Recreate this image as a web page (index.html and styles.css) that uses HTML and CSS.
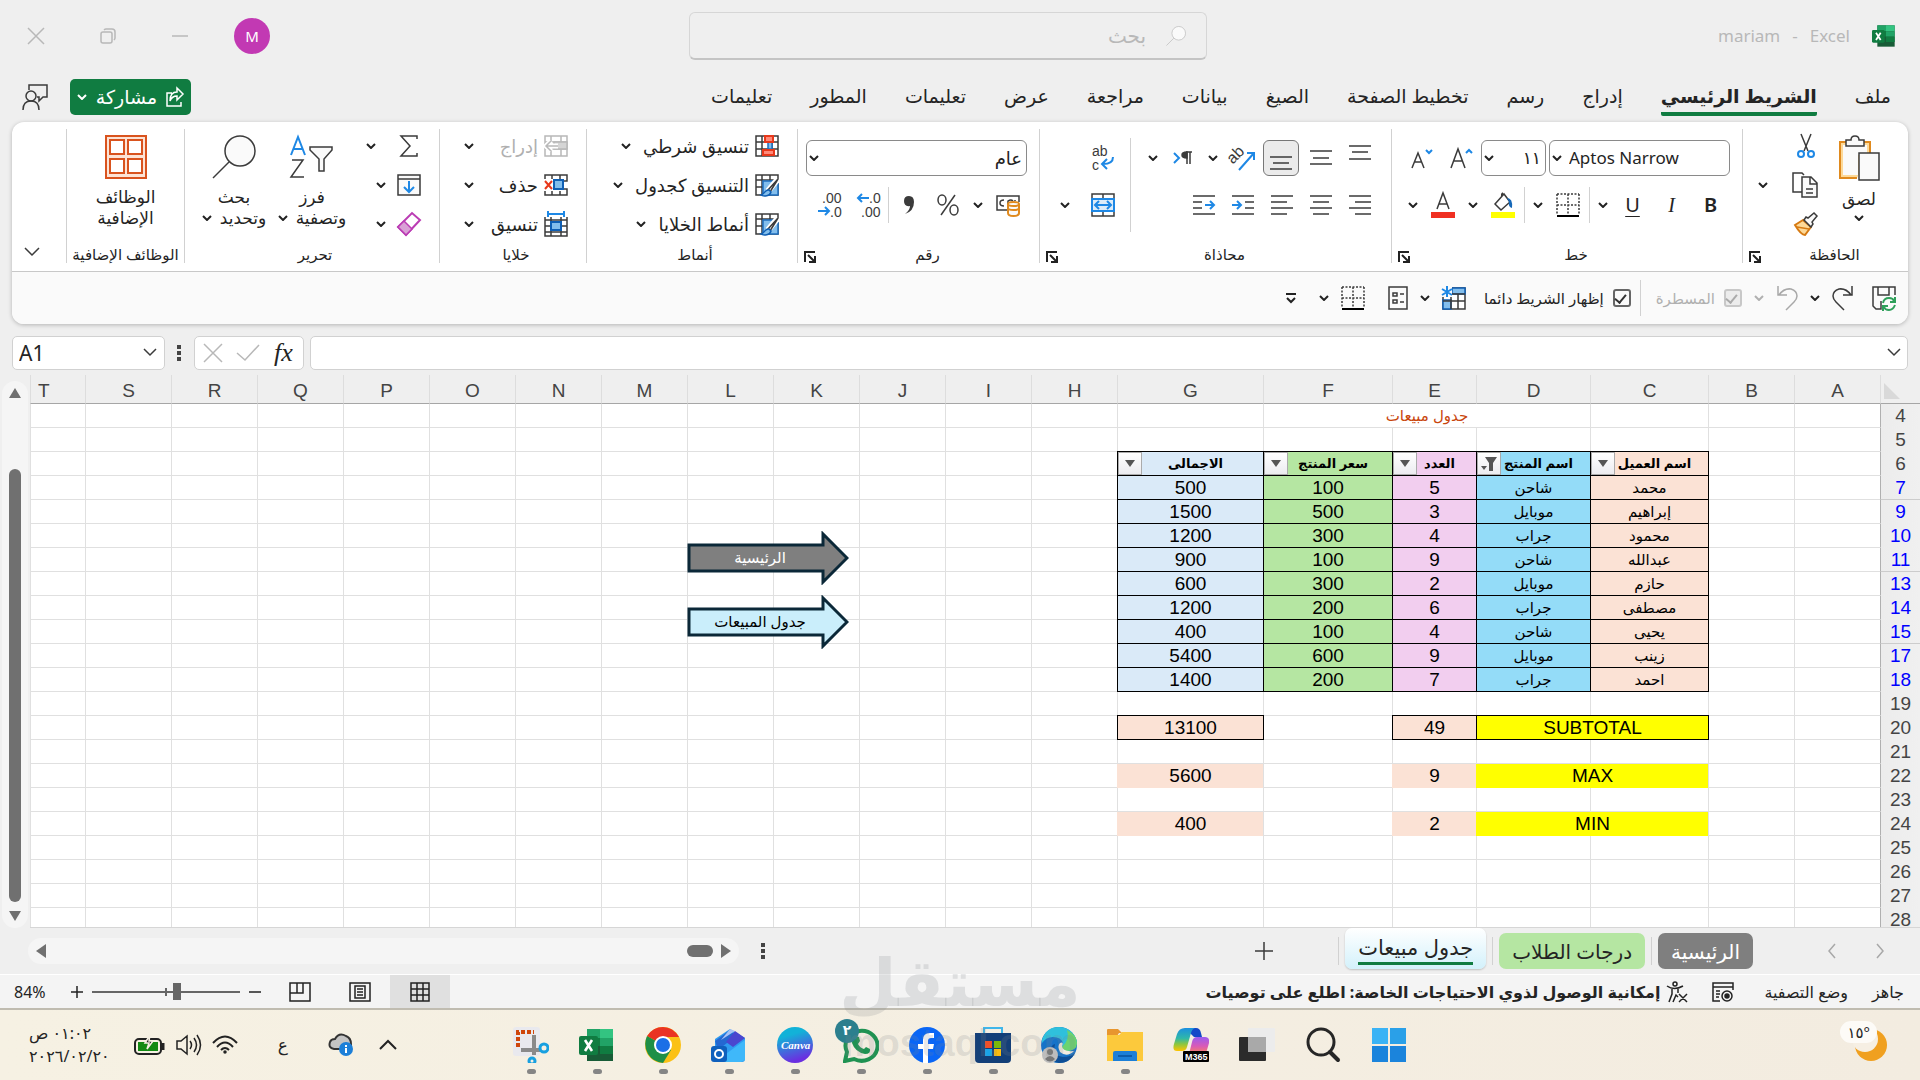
FILE: index.html
```html
<!doctype html>
<html lang="ar" dir="rtl">

<head>
  <meta charset="UTF-8">
  <meta name="viewport" content="width=device-width, initial-scale=1.0">
  <title>mariam - Excel</title>
  <link rel="stylesheet" href="styles.css">
</head>

<body>
  <!-- icon sprite -->
  <svg class="sprite" aria-hidden="true">
    <symbol id="chev" viewBox="0 0 10 6"><path d="M1 1l4 4 4-4" /></symbol>
    <symbol id="launch" viewBox="0 0 12 12"><path d="M1 11V1h10M4 4l6 6M11 5v6H5" /></symbol>
    <symbol id="lens" viewBox="0 0 44 44"><circle cx="28" cy="16" r="15" fill="#fafafa" /><path d="M17 27L1 43" /></symbol>
    <symbol id="borders" viewBox="0 0 24 24">
      <path d="M1 1h22M1 12h22M1 1v20M12 1v20M23 1v20" stroke-dasharray="2 1.5" />
      <path d="M1 23h22" stroke="#000" stroke-width="2" />
    </symbol>
    <symbol id="grid" viewBox="0 0 24 22">
      <path d="M1 1h22v20H1zM1 7h22M1 14h22M7 1v20M17 1v20" />
    </symbol>
    <symbol id="gridbrush" viewBox="0 0 24 24">
      <path d="M1 2h22v20H1zM1 7h22M1 14h22M7 2v20M15 2v20" fill="#fff" />
      <path d="M8 8h15v14H8z" fill="#83beec" stroke="#1e6fc0" />
      <path d="M23 6L13 18" stroke="#fff" stroke-width="6" />
      <path d="M23 6L13 17l2 2z" fill="#fff" />
      <path d="M14 17c-4-1-4 4-8 5 3 2 9 1 10-3z" fill="#83beec" stroke="#0f5fb4" />
    </symbol>
    <symbol id="excel" viewBox="0 0 36 36">
      <path d="M8 2h26v32H8z" fill="#185c37" /><path d="M8 2h13v9H8z" fill="#21a366" />
      <path d="M21 2h13v9H21z" fill="#33c481" /><path d="M8 11h13v8H8z" fill="#107c41" />
      <path d="M21 11h13v8H21z" fill="#21a366" /><path d="M21 19h13v8H21z" fill="#107c41" />
      <rect x="0" y="9" width="19" height="19" rx="2" fill="#107c41" />
      <path d="M6 13l7 11M13 13L6 24" stroke="#fff" stroke-width="2.6" />
    </symbol>
  </svg>

  <header class="titlebar">
    <div class="doc">
      <svg class="logo"><use href="#excel" /></svg>
      <span class="doc-name" dir="ltr"><span>mariam</span><span>-</span><span>Excel</span></span>
    </div>
    <label class="search">
      <svg class="ico pale" width="20" height="22"><use href="#lens" /></svg>
      <input type="search" placeholder="بحث" aria-label="بحث">
    </label>
    <div class="window-btns">
      <button class="avatar" type="button">M</button>
      <button type="button" aria-label="تصغير"><svg class="ico pale" width="16" height="16"><path d="M0 8h16" /></svg></button>
      <button type="button" aria-label="استعادة"><svg class="ico pale" width="16" height="16"><rect x="1" y="4" width="11" height="11" rx="2" /><path d="M4 2q1-1 2-1h6q3 0 3 3v6q0 1-1 2" /></svg></button>
      <button type="button" aria-label="إغلاق"><svg class="ico pale" width="16" height="16"><path d="M0 0l16 16M16 0L0 16" /></svg></button>
    </div>
  </header>

  <nav class="tabs">
    <a href="#">ملف</a>
    <a href="#" class="active">الشريط الرئيسي</a>
    <a href="#">إدراج</a>
    <a href="#">رسم</a>
    <a href="#">تخطيط الصفحة</a>
    <a href="#">الصيغ</a>
    <a href="#">بيانات</a>
    <a href="#">مراجعة</a>
    <a href="#">عرض</a>
    <a href="#">تعليمات</a>
    <a href="#">المطور</a>
    <a href="#">تعليمات</a>
    <button class="share" type="button">
      <svg class="ico" width="18" height="20"><path d="M6 6H1v13h14v-4M11 1l6 6-6 6V9q-5 0-7 5 0-9 7-9z" /></svg>
      <span>مشاركة</span>
      <svg class="chev"><use href="#chev" /></svg>
    </button>
    <button class="comments" type="button" aria-label="التعليقات">
      <svg class="ico" width="26" height="26"><path d="M7 6V1h18v12h-4l-4 4v-4h-2" /><circle cx="9" cy="12" r="5" /><path d="M1 26q0-9 8-9t8 9" /></svg>
    </button>
  </nav>

  <section class="ribbon">
    <div class="groups">
      <div class="group g-clip">
        <div class="body">
          <button class="big" type="button">
            <svg class="ico" width="42" height="46">
              <path d="M19 43H2V7h30v12" fill="#fdd998" stroke="#e08a1e" stroke-width="2" />
              <path d="M5 10h24v10h-9v20H5z" fill="#fafafa" stroke="none" />
              <path d="M8 11V5h5q0-4 4-4t4 4h5v6z" fill="#fafafa" />
              <path d="M21 18h20v27H21z" fill="#fafafa" />
            </svg>
            <span>لصق</span>
            <svg class="chev"><use href="#chev" /></svg>
          </button>
          <div class="stack">
            <button type="button" aria-label="قص"><svg class="ico" width="24" height="24"><path d="M7 0l7 17M17 0l-7 17" /><circle cx="7" cy="20" r="3" stroke="#1e88e5" stroke-width="2" /><circle cx="17" cy="20" r="3" stroke="#1e88e5" stroke-width="2" /></svg></button>
            <button type="button" aria-label="نسخ"><svg class="ico" width="26" height="26"><path d="M10 20H1V1h9l2 2" /><path d="M10 5h9l6 6v14H10zM18 5v7h7M14 17h7M14 21h7" fill="#fafafa" /></svg><svg class="chev"><use href="#chev" /></svg></button>
            <button type="button" aria-label="نسخ التنسيق"><svg class="ico" width="24" height="24"><path d="M9 8L1 13q6 10 10 10l6-8z" fill="#fdd998" stroke="#d67a12" stroke-width="2" /><path d="M3 15l12 2" stroke="#d67a12" /><path d="M10 8l7 7 2-3-1-2 5-6-3-3-6 5-2-1z" fill="#fafafa" /></svg></button>
          </div>
        </div>
        <div class="foot"><span>الحافظة</span><svg class="launch"><use href="#launch" /></svg></div>
      </div>

      <div class="group g-font">
        <div class="body two">
          <div class="line">
            <div class="combo name"><select aria-label="الخط" dir="ltr"><option>Aptos Narrow</option></select><svg class="chev"><use href="#chev" /></svg></div>
            <div class="combo size"><select aria-label="حجم الخط"><option>١١</option></select><svg class="chev"><use href="#chev" /></svg></div>
            <button class="slot" type="button" aria-label="تكبير"><svg class="ico" width="24" height="24"><path d="M1 22L8 3l7 19M4 15h8" /><path d="M16 7l3-3 3 3" stroke="#1e88e5" stroke-width="2" /></svg></button>
            <button class="slot" type="button" aria-label="تصغير"><svg class="ico" width="24" height="24"><path d="M1 22L7 7l6 15M3 16h8" /><path d="M15 4l3 3 3-3" stroke="#1e88e5" stroke-width="2" /></svg></button>
          </div>
          <div class="line">
            <button class="slot glyph bold" type="button">B</button>
            <button class="slot glyph italic" type="button">I</button>
            <button class="slot glyph under" type="button">U</button>
            <button class="drop" type="button" aria-label="تسطير"><svg class="chev"><use href="#chev" /></svg></button>
            <i class="bar"></i>
            <button class="slot" type="button" aria-label="حدود"><svg class="ico" width="24" height="24"><use href="#borders" /></svg></button>
            <button class="drop" type="button" aria-label="حدود"><svg class="chev"><use href="#chev" /></svg></button>
            <i class="bar"></i>
            <button class="slot" type="button" aria-label="لون التعبئة"><svg class="ico" width="24" height="26"><path d="M0 20h24v6H0z" fill="#ff0" stroke="none" /><path d="M12 1q-2 1-1 4M4 12l9-10 6 8-9 8z" /><path d="M16 6q6 0 5 10-4-1-3-6z" fill="#1668b8" stroke="none" /></svg></button>
            <button class="drop" type="button" aria-label="لون التعبئة"><svg class="chev"><use href="#chev" /></svg></button>
            <button class="slot" type="button" aria-label="لون الخط"><svg class="ico" width="24" height="26"><path d="M0 20h24v6H0z" fill="#f03022" stroke="none" /><path d="M6 17l6-16 6 16M8 12h8" /></svg></button>
            <button class="drop" type="button" aria-label="لون الخط"><svg class="chev"><use href="#chev" /></svg></button>
          </div>
        </div>
        <div class="foot"><span>خط</span><svg class="launch"><use href="#launch" /></svg></div>
      </div>

      <div class="group g-align">
        <div class="body">
          <div class="two align-main">
            <div class="line">
              <button class="slot" type="button" aria-label="محاذاة للأعلى"><svg class="ico" width="22" height="26"><path d="M0 1h22M3 7h16M0 14h22" /></svg></button>
              <button class="slot" type="button" aria-label="محاذاة للوسط"><svg class="ico" width="22" height="26"><path d="M0 6h22M3 13h16M0 19h22" /></svg></button>
              <button class="slot pressed" type="button" aria-label="محاذاة للأسفل"><svg class="ico" width="22" height="26"><path d="M0 12h22M3 18h16M0 24h22" /></svg></button>
              <button class="slot" type="button" aria-label="الاتجاه"><svg class="ico" width="26" height="26"><text class="rot" x="-12" y="16">ab</text><path d="M9 25L24 8M17 8h7v7" stroke="#1e88e5" stroke-width="2" /></svg></button>
              <button class="drop" type="button" aria-label="الاتجاه"><svg class="chev"><use href="#chev" /></svg></button>
              <button class="slot" type="button" aria-label="اتجاه النص"><svg class="ico" width="20" height="16"><path d="M1 3l5 5-5 5" stroke="#1e88e5" stroke-width="2" /><path d="M19 2h-6M14 2v12M17 2v12" /><path d="M14 2q-5 0-5 3t5 3z" fill="#3b3b3b" /></svg></button>
              <button class="drop" type="button" aria-label="اتجاه النص"><svg class="chev"><use href="#chev" /></svg></button>
            </div>
            <div class="line">
              <button class="slot" type="button" aria-label="يمين"><svg class="ico" width="22" height="22"><path d="M0 2h22M6 8h16M0 14h22M6 20h16" /></svg></button>
              <button class="slot" type="button" aria-label="توسيط"><svg class="ico" width="22" height="22"><path d="M0 2h22M3 8h16M0 14h22M3 20h16" /></svg></button>
              <button class="slot" type="button" aria-label="يسار"><svg class="ico" width="22" height="22"><path d="M0 2h22M0 8h16M0 14h22M0 20h16" /></svg></button>
              <button class="slot" type="button" aria-label="إنقاص المسافة"><svg class="ico" width="22" height="22"><path d="M0 2h22M13 8h9M13 14h9M0 20h22" /><path d="M0 11h9M5 7l4 4-4 4" stroke="#1e88e5" stroke-width="2" /></svg></button>
              <button class="slot" type="button" aria-label="زيادة المسافة"><svg class="ico" width="22" height="22"><path d="M0 2h22M0 8h9M0 14h9M0 20h22" /><path d="M12 11h9M17 7l4 4-4 4" stroke="#1e88e5" stroke-width="2" /></svg></button>
            </div>
          </div>
          <i class="bar tall"></i>
          <div class="two">
            <div class="line">
              <button class="slot" type="button" aria-label="التفاف النص"><svg class="ico" width="22" height="26"><text x="0" y="11">ab</text><text x="0" y="25">c</text><path d="M21 12q0 7-10 7M15 14l-5 5 5 5" stroke="#1e88e5" stroke-width="2" /></svg></button>
            </div>
            <div class="line">
              <button class="slot" type="button" aria-label="دمج وتوسيط"><svg class="ico" width="24" height="24"><path d="M1 1h22v22H1zM12 1v22" /><path d="M1 6h22v12H1z" fill="#dcecf9" stroke="#1e88e5" stroke-width="2" /><path d="M4 12h16M8 8l-4 4 4 4M16 8l4 4-4 4" stroke="#1e88e5" stroke-width="2" /></svg></button>
              <button class="drop wide" type="button" aria-label="دمج وتوسيط"><svg class="chev"><use href="#chev" /></svg></button>
            </div>
          </div>
        </div>
        <div class="foot"><span>محاذاة</span><svg class="launch"><use href="#launch" /></svg></div>
      </div>

      <div class="group g-num">
        <div class="body two">
          <div class="line">
            <div class="combo fill"><select aria-label="تنسيق الأرقام"><option>عام</option></select><svg class="chev"><use href="#chev" /></svg></div>
          </div>
          <div class="line">
            <button class="slot" type="button" aria-label="عملة"><svg class="ico" width="24" height="24"><path d="M12 17H1V3h22v6" /><path d="M8 7Q4 7 4 10t4 3M12 13V8q3-2 5 0M19 8v-1" /><path d="M12 11v9q0 3 5.500 3t5.500-3v-9q0-2-5.500-2T12 11z" fill="#fafafa" stroke="#e08a1e" stroke-width="2" /><path d="M12 11q0 2 5.500 2t5.500-2M12 15q0 2 5.500 2t5.500-2" stroke="#e08a1e" stroke-width="2" /></svg></button>
            <button class="drop" type="button" aria-label="عملة"><svg class="chev"><use href="#chev" /></svg></button>
            <button class="slot" type="button" aria-label="نسبة مئوية"><svg class="ico" width="24" height="24"><ellipse cx="6" cy="7" rx="4" ry="5" /><ellipse cx="18" cy="17" rx="4" ry="5" /><path d="M19 2L5 22" /></svg></button>
            <button class="slot" type="button" aria-label="فاصلة"><svg class="ico" width="12" height="20"><path d="M6 1q5 0 5 6 0 9-9 12 5-4 5-8Q1 12 1 6q0-5 5-5z" fill="#3b3b3b" stroke="none" /></svg></button>
            <i class="bar"></i>
            <button class="slot" type="button" aria-label="زيادة المنازل"><svg class="ico" width="24" height="26"><text x="12" y="11">.0</text><text x="4" y="25">.00</text><path d="M12 6H1M5 2L1 6l4 4" stroke="#1e88e5" stroke-width="2" /></svg></button>
            <button class="slot" type="button" aria-label="إنقاص المنازل"><svg class="ico" width="24" height="26"><text x="4" y="11">.00</text><text x="12" y="25">.0</text><path d="M0 19h11M7 15l4 4-4 4" stroke="#1e88e5" stroke-width="2" /></svg></button>
          </div>
        </div>
        <div class="foot"><span>رقم</span><svg class="launch"><use href="#launch" /></svg></div>
      </div>

      <div class="group g-styles">
        <div class="body stack text">
          <button type="button"><svg class="ico" width="24" height="22"><use href="#grid" /><path d="M13 7h4v7h-4z" fill="#83beec" stroke="#1e6fc0" /><path d="M10 1h8v6h-8zM8 15h11v5H8z" fill="#ff8a7a" stroke="#e8381b" stroke-width="2" /></svg><span>تنسيق شرطي</span><svg class="chev"><use href="#chev" /></svg></button>
          <button type="button"><svg class="ico" width="24" height="24"><use href="#gridbrush" /></svg><span>التنسيق كجدول</span><svg class="chev"><use href="#chev" /></svg></button>
          <button type="button"><svg class="ico" width="24" height="24"><use href="#gridbrush" /></svg><span>أنماط الخلايا</span><svg class="chev"><use href="#chev" /></svg></button>
        </div>
        <div class="foot"><span>أنماط</span></div>
      </div>

      <div class="group g-cells">
        <div class="body stack text">
          <button type="button" disabled><svg class="ico pale" width="24" height="22"><use href="#grid" /><path d="M10 7h13v7H10z" fill="#d5d5d5" /><path d="M14 11H2M7 6l-5 5 5 5" stroke="#fff" stroke-width="5" /><path d="M14 11H2M7 6l-5 5 5 5" /></svg><span>إدراج</span><svg class="chev"><use href="#chev" /></svg></button>
          <button type="button"><svg class="ico" width="24" height="22"><path d="M1 5V1h22v6h-6M1 17v4h22v-6h-6M8 1v4M16 1v4M8 21v-4M16 21v-4" /><path d="M10 6h9v9h-9z" fill="#83beec" stroke="#0f5fb4" stroke-width="2" /><path d="M1 7l7 8M8 7l-7 8" stroke="#e8381b" stroke-width="2" /></svg><span>حذف</span><svg class="chev"><use href="#chev" /></svg></button>
          <button type="button"><svg class="ico" width="24" height="26"><path d="M1 6v19h22V6M1 9h22M1 15h22M1 21h22M7 6v19M17 6v19" /><path d="M7 11h10v8H7z" fill="#83beec" stroke="#0f5fb4" stroke-width="2" /><path d="M4 3h16M4 0v6M20 0v6" stroke="#1e88e5" stroke-width="2" /></svg><span>تنسيق</span><svg class="chev"><use href="#chev" /></svg></button>
        </div>
        <div class="foot"><span>خلايا</span></div>
      </div>

      <div class="group g-edit">
        <div class="body">
          <div class="stack">
            <button type="button" aria-label="جمع تلقائي"><svg class="ico" width="24" height="22"><path d="M20 4V1H4l9 10-9 10h16v-3" /></svg><svg class="chev far"><use href="#chev" /></svg></button>
            <button type="button" aria-label="تعبئة"><svg class="ico" width="24" height="22"><path d="M1 1h22v20H1zM1 5h22" fill="#fafafa" /><path d="M12 7v11M7 13l5 5 5-5" stroke="#1e88e5" stroke-width="2" /></svg><svg class="chev"><use href="#chev" /></svg></button>
            <button type="button" aria-label="مسح"><svg class="ico" width="24" height="24"><path d="M1 15L15 1l8 7L9 23z" fill="#fff" stroke="#bb3cb4" stroke-width="2" /><path d="M1 15l6-6 8 8-6 6z" fill="#d9a0d6" stroke="#bb3cb4" /></svg><svg class="chev"><use href="#chev" /></svg></button>
          </div>
          <button class="big sort" type="button">
            <svg class="ico" width="44" height="44"><path d="M1 20L8 2l7 18M3 14h10" stroke="#1e88e5" stroke-width="2" /><path d="M2 25h11L1 42h13" /><path d="M20 12h22v3l-8 9v12h-5V24l-9-9z" fill="#fafafa" /></svg>
            <span>فرز</span>
            <span>وتصفية <svg class="chev"><use href="#chev" /></svg></span>
          </button>
          <button class="big find" type="button">
            <svg class="ico" width="44" height="44"><use href="#lens" /></svg>
            <span>بحث</span>
            <span>وتحديد <svg class="chev"><use href="#chev" /></svg></span>
          </button>
        </div>
        <div class="foot"><span>تحرير</span></div>
      </div>

      <div class="group g-addins">
        <div class="body">
          <button class="big" type="button">
            <svg class="ico" width="42" height="44"><path d="M1 1h40v42H1z" fill="#fde3d5" stroke="#d9531e" stroke-width="2" /><path d="M5 5h14v14H5zM23 5h14v14H23zM5 24h14v14H5zM23 24h14v14H23z" fill="#fff" stroke="#d9531e" stroke-width="2" /></svg>
            <span>الوظائف</span>
            <span>الإضافية</span>
          </button>
        </div>
        <div class="foot"><span>الوظائف الإضافية</span></div>
      </div>

      <button class="collapse" type="button" aria-label="طي الشريط"><svg class="ico" width="16" height="10"><path d="M1 1l7 7 7-7" /></svg></button>
    </div>

    <div class="quick">
      <button type="button" aria-label="حفظ"><svg class="ico" width="24" height="26"><path d="M23 10V2H1v19l3 3h5v-8M6 2v8h11V2" /><path d="M11 18q1-5 6-5 4 0 5 3M23 12v5h-5M23 20q-2 5-6 5-4 0-5-3M11 26v-5h5" stroke="#2ea05a" stroke-width="2" /></svg></button>
      <button type="button" aria-label="إعادة"><svg class="ico" width="22" height="24"><path d="M20 0v9h-9M19 9Q14 2 7 3 1 5 1 10q0 3 3 6l8 8" /></svg></button>
      <svg class="chev"><use href="#chev" /></svg>
      <button type="button" aria-label="تراجع"><svg class="ico dim" width="22" height="24"><path d="M2 0v9h9M3 9q5-7 12-6 6 2 6 7 0 3-3 6l-8 8" /></svg></button>
      <svg class="chev dim"><use href="#chev" /></svg>
      <label class="off"><input type="checkbox" checked disabled>المسطرة</label>
      <i class="bar"></i>
      <label><input type="checkbox" checked>إظهار الشريط دائما</label>
      <button type="button" aria-label="تجميد"><svg class="ico" width="24" height="24"><path d="M1 2h22v21H1z" fill="#fff" /><path d="M10 2h13v6H10zM1 14h8v9H1z" fill="#83beec" stroke="#0f5fb4" /><path d="M9 8v15M16 8v15M1 15h22M9 8h14" /><path d="M0 0h10v11H0z" fill="#fafafa" stroke="none" /><path d="M5 0v11M0 3l10 6M10 3L0 9" stroke="#1e88e5" stroke-width="2" /></svg></button>
      <svg class="chev"><use href="#chev" /></svg>
      <button type="button" aria-label="نموذج"><svg class="ico" width="20" height="24"><path d="M1 1h18v22H1zM5 7h4v3H5zM12 8h4M5 14h4v3H5zM12 16h4" /></svg></button>
      <button class="edges" type="button" aria-label="حدود"><svg class="ico" width="24" height="24"><use href="#borders" /></svg></button>
      <svg class="chev"><use href="#chev" /></svg>
      <button class="custom" type="button" aria-label="تخصيص"><svg class="ico" width="12" height="10"><path d="M1 1h10M2 5l4 4 4-4" stroke="#222" stroke-width="2" /></svg></button>
    </div>
  </section>

  <section class="formula" dir="ltr">
    <div class="namebox"><input type="text" value="A1" aria-label="مربع الاسم"><svg class="ico" width="14" height="9"><path d="M1 1l6 6 6-6" /></svg></div>
    <svg class="dots" width="4" height="16"><path d="M0 0h4v4H0zM0 6h4v4H0zM0 12h4v4H0z" /></svg>
    <div class="fx">
      <svg class="ico pale" width="18" height="18"><path d="M0 0l18 18M18 0L0 18" /></svg>
      <svg class="ico pale" width="24" height="16"><path d="M1 8l8 7L23 0" /></svg>
      <em>fx</em>
    </div>
    <div class="entry"><input type="text" aria-label="شريط الصيغة"><svg class="ico" width="14" height="9"><path d="M1 1l6 6 6-6" /></svg></div>
  </section>

  <main class="sheet">
    <div class="grid-wrap">
      <table class="cells">
        <colgroup id="cols"></colgroup>
        <thead><tr id="letters"></tr></thead>
        <tbody id="rows"></tbody>
      </table>
      <!-- navigation shapes lying over the cells -->
      <a href="#" class="shape home"><svg viewBox="0 0 162 54"><path d="M2 14h134V3l24 24-24 24V40H2z" /></svg><span>الرئيسية</span></a>
      <a href="#" class="shape sales"><svg viewBox="0 0 162 54"><path d="M2 14h134V3l24 24-24 24V40H2z" /></svg><span>جدول المبيعات</span></a>
    </div>
    <div class="vscroll">
      <svg width="14" height="12"><path d="M7 1l6 10H1z" /></svg>
      <i></i>
      <svg width="14" height="12"><path d="M7 11L1 1h12z" /></svg>
    </div>
  </main>

  <footer class="sheetbar">
    <button class="arrow" type="button" aria-label="السابق"><svg class="ico dim" width="10" height="16"><path d="M2 1l6 7-6 7" /></svg></button>
    <button class="arrow" type="button" aria-label="التالي"><svg class="ico dim" width="10" height="16"><path d="M8 1L2 8l6 7" /></svg></button>
    <a href="#" class="sheet-tab gray">الرئيسية</a>
    <i class="bar"></i>
    <a href="#" class="sheet-tab green">درجات الطلاب</a>
    <i class="bar"></i>
    <a href="#" class="sheet-tab current"><span>جدول مبيعات</span></a>
    <i class="bar"></i>
    <button class="add" type="button" aria-label="ورقة جديدة"><svg class="ico" width="18" height="18"><path d="M9 0v18M0 9h18" /></svg></button>
    <div class="hscroll">
      <svg class="dots" width="4" height="16"><path d="M0 0h4v4H0zM0 6h4v4H0zM0 12h4v4H0z" /></svg>
      <div class="track">
        <svg width="10" height="14"><path d="M0 0l10 7-10 7z" /></svg>
        <i></i>
        <svg class="end" width="10" height="14"><path d="M10 0v14L0 7z" /></svg>
      </div>
    </div>
  </footer>

  <footer class="status">
    <span>جاهز</span>
    <span>وضع التصفية</span>
    <svg class="ico macro" width="22" height="20"><path d="M8 19H1V1h20v7M1 5h20M4 9h4M4 12h4M4 15h3" /><circle cx="15" cy="14" r="5" /><circle cx="15" cy="14" r="2" fill="#222" /></svg>
    <span class="access"><svg class="ico" width="22" height="22"><circle cx="9" cy="3" r="2" /><path d="M1 5q7 5 16 0M6 8v5l-3 8M12 8v4M7 21l3-7 2 2M13 13l8 8M21 13l-8 8" /></svg>إمكانية الوصول لذوي الاحتياجات الخاصة: اطلع على توصيات</span>
    <div class="views">
      <button class="on" type="button" aria-label="عادي"><svg class="ico" width="20" height="20"><path d="M1 1h18v18H1zM1 7h18M1 13h18M7 1v18M13 1v18" /></svg></button>
      <button type="button" aria-label="تخطيط الصفحة"><svg class="ico" width="22" height="20"><path d="M1 1h20v18H1zM6 4h10v12H6zM8 7h6M8 10h6M8 13h6" /></svg></button>
      <button type="button" aria-label="فواصل الصفحات"><svg class="ico" width="22" height="20"><path d="M1 1h20v18H1zM1 11h13V1M8 1v10" /></svg></button>
    </div>
    <div class="zoom">
      <svg class="ico" width="12" height="12"><path d="M0 6h12" /></svg>
      <input type="range" min="0" max="100" value="42" aria-label="تكبير/تصغير">
      <svg class="ico" width="12" height="12"><path d="M0 6h12M6 0v12" /></svg>
      <span dir="ltr">84%</span>
    </div>
  </footer>

  <div class="taskbar">
    <div class="weather"><svg width="36" height="36"><circle cx="18" cy="18" r="16" fill="#f0a020" /><circle cx="12" cy="12" r="13" fill="#f6efe3" /></svg><span>°١٥</span></div>
    <div class="apps">
      <button type="button" aria-label="ابدأ"><svg viewBox="0 0 36 36"><path d="M1 1h16v16H1z" fill="#3bb3f5" /><path d="M19 1h16v16H19z" fill="#2aa0e8" /><path d="M1 19h16v16H1zM19 19h16v16H19z" fill="#1b84dc" /></svg></button>
      <button type="button" aria-label="بحث"><svg viewBox="0 0 36 36" fill="none" stroke="#262626"><circle cx="16" cy="15" r="13" stroke-width="3" /><path d="M25 25l8 8" stroke-width="4" stroke-linecap="round" /></svg></button>
      <button type="button" aria-label="عرض المهام"><svg viewBox="0 0 36 36"><rect x="0" y="10" width="27" height="24" rx="1" fill="#2b2b2b" /><rect x="9" y="1" width="27" height="24" rx="1" fill="#ececec" /><path d="M9 10h18v15H9z" fill="#a9a9a9" /></svg></button>
      <button type="button" aria-label="Copilot">
        <svg viewBox="0 0 36 36">
          <defs>
            <linearGradient id="cpa" x2="0" y2="1"><stop offset="0" stop-color="#1b8fe0" /><stop offset=".45" stop-color="#2fb8a8" /><stop offset=".7" stop-color="#8cc63f" /><stop offset="1" stop-color="#ffc400" /></linearGradient>
            <linearGradient id="cpb" x2="0" y2="1"><stop offset="0" stop-color="#9a5cf0" /><stop offset=".5" stop-color="#d85ab8" /><stop offset="1" stop-color="#ff8a4c" /></linearGradient>
          </defs>
          <path d="M12 1h11q4 0 5 5l1 4h-8z" fill="#1448c8" />
          <path d="M12 1h10q-3 1-4 5l-4 14q-1 4-5 4H4q-5 0-3-7l3-10q2-6 8-6z" fill="url(#cpa)" />
          <path d="M24 10h8q5 0 4 6l-2 7q-1 5-7 5H13q3-1 4-5l2-8q1-5 5-5z" fill="url(#cpb)" />
          <rect x="10" y="24" width="26" height="11" rx="1" fill="#000" />
          <text x="12" y="33" class="m365">M365</text>
        </svg>
      </button>
      <button type="button" class="run" aria-label="المستكشف"><svg viewBox="0 0 36 36"><path d="M0 3q0-1 1-1h10l4 4h-3l-2 3H0z" fill="#e8962e" /><path d="M0 8h12l3-3h21v29H0z" fill="#fcc93c" /><path d="M6 34V26q0-2 2-2h20q2 0 2 2v8z" fill="#1b7fd8" /><path d="M11 29h14" stroke="#0b5cab" stroke-width="2" /></svg></button>
      <button type="button" class="run" aria-label="Edge"><svg viewBox="0 0 36 36"><circle cx="18" cy="18" r="18" fill="#1573c9" /><path d="M1 13Q5 0 18 0t18 14q0 10-11 10-5 0-5-3t2-5q-2-6-10-6Q5 10 1 16z" fill="#2fc0dc" /><path d="M26 3q10 5 10 13 0 8-11 8-5 0-4-4 8-7 5-17z" fill="#6bd36f" /><path d="M14 17q-3 12 8 13 7 0 12-4-5 10-16 10Q8 34 9 24q1-6 5-7z" fill="#0f4f96" /><path d="M19 16q4-2 2 3 0 6 12 5-7 7-14 1-3-6 0-9z" fill="#f3ece0" /><circle cx="9" cy="28" r="8" fill="#bdbdbd" /><circle cx="9" cy="25" r="3" fill="#777" /><path d="M4 32q5-6 10 0-5 5-10 0z" fill="#777" /></svg></button>
      <button type="button" class="run" aria-label="Store"><svg viewBox="0 0 36 36"><path d="M9 6V1h18v5" fill="none" stroke="#3fb6ea" stroke-width="2" /><path d="M0 6h36v26q0 4-4 4H4q-4 0-4-4z" fill="#133f78" /><path d="M10 14h7v7h-7z" fill="#f0502a" /><path d="M19 14h7v7h-7z" fill="#7cb80a" /><path d="M10 22h7v7h-7z" fill="#19a4e8" /><path d="M19 22h7v7h-7z" fill="#fbbb10" /></svg></button>
      <button type="button" class="run" aria-label="Facebook"><svg viewBox="0 0 36 36"><circle cx="18" cy="18" r="18" fill="#0a66f5" /><path d="M14 36V22h-5v-5h5v-4q0-7 7-7h4v5h-3q-3 0-3 3v3h6l-1 5h-5v14z" fill="#fff" /></svg></button>
      <button type="button" class="run" aria-label="WhatsApp"><svg viewBox="0 0 36 36"><path d="M2 34l2-9A16 15 0 1 1 11 32z" fill="#f3ece0" stroke="#1f9252" stroke-width="4" /><path d="M12 9l4 1 1 4-2 3q2 4 6 5l2-2 4 2q1 5-5 5-10-2-13-11 0-5 3-7z" fill="#1f9252" /></svg><b>٢</b></button>
      <button type="button" class="run" aria-label="Canva"><svg viewBox="0 0 36 36"><defs><linearGradient id="cv" x2=".3" y2="1"><stop offset=".3" stop-color="#12b2d8" /><stop offset="1" stop-color="#6a2fe0" /></linearGradient></defs><circle cx="18" cy="18" r="18" fill="url(#cv)" /><text x="4" y="22" class="canva">Canva</text></svg></button>
      <button type="button" class="run" aria-label="Outlook"><svg viewBox="0 0 36 36"><path d="M4 12L19 2l15 9v21q0 3-3 3H7q-3 0-3-3z" fill="#2f9bf0" /><path d="M4 14L19 3l6 6-18 14z" fill="#2468d2" /><path d="M19 2l5 2-14 9z" fill="#a9c4f5" /><path d="M24 4l10 7-12 9-7-5z" fill="#4b46cf" /><path d="M8 32l26-19v20l-4 2H8z" fill="#3fb8fa" /><rect x="0" y="19" width="16" height="16" rx="3" fill="#0f60bd" /><circle cx="8" cy="27" r="4" fill="none" stroke="#fff" stroke-width="2" /></svg></button>
      <button type="button" class="run" aria-label="Chrome"><svg viewBox="0 0 36 36"><circle cx="18" cy="18" r="18" fill="#fbc116" /><path d="M18 18L2 9Q8 0 18 0t16 10H18z" fill="#ea3323" /><path d="M2 9Q-2 18 3 27q5 8 15 9l8-13-8-5z" fill="#1e8f47" /><circle cx="18" cy="18" r="9" fill="#fff" /><circle cx="18" cy="18" r="7" fill="#1b6fe6" /></svg></button>
      <button type="button" class="run" aria-label="Excel"><svg viewBox="0 0 36 36"><use href="#excel" /></svg></button>
      <button type="button" class="run" aria-label="أداة القص"><svg viewBox="0 0 36 36"><rect x="0" y="0" width="27" height="29" rx="3" fill="#e9e9ee" /><path d="M5 20V5h16" fill="none" stroke="#cf460b" stroke-width="4" stroke-dasharray="4 2" /><path d="M21 8v20M8 23h20" stroke="#8a8a8a" stroke-width="4" /><circle cx="31" cy="21" r="4" fill="none" stroke="#18a0e0" stroke-width="3" /><circle cx="19" cy="34" r="3" fill="none" stroke="#18a0e0" stroke-width="3" /></svg></button>
    </div>
    <div class="tray">
      <svg class="ico up" width="18" height="12"><path d="M1 10l8-8 8 8" stroke-width="2" /></svg>
      <svg width="26" height="24"><path d="M6 16q-6-1-4-7 1-3 5-3 4-7 11-3 5 2 5 8v5z" fill="#c4c4c4" stroke="#333" stroke-width="2" /><circle cx="18" cy="16" r="7" fill="#1c7fd8" /><path d="M18 12v2M18 15v5" stroke="#fff" stroke-width="2" /></svg>
      <span class="lang">ع</span>
      <svg class="ico" width="26" height="20"><path d="M1 8q12-13 24 0M5 12q8-9 16 0M9 15q4-4 8 0" stroke-width="2" /><circle cx="13" cy="17" r="1" fill="#222" /></svg>
      <svg class="ico" width="26" height="22"><path d="M1 7v8h4l6 5V2L5 7zM14 7q3 4 0 8M18 4q5 7 0 14M21 1q7 10 0 20" /></svg>
      <svg class="ico" width="32" height="20"><rect x="1" y="4" width="26" height="15" rx="4" stroke-width="2" /><path d="M4 7h20v9H4z" fill="#138a13" stroke="none" /><path d="M29 8v7" stroke-width="3" /><path d="M16 0l-5 8h4l-2 6 6-8h-4z" fill="#222" stroke="#f4efe2" /></svg>
      <span class="clock">٠١:٠٢ ص<br>٢٠٢٦/٠٢/٢٠</span>
    </div>
  </div>

  <div class="brand"><b>مستقل</b><span>mostaql.com</span></div>

  <script src="script.js"></script>
</body>

</html>
```
FILE: styles.css
```css
* {
  margin: 0;
  padding: 0;
  box-sizing: border-box;
}

body {
  --ink: #242424;
  --line: #d1d1d1;
  --green: #107c41;
  position: relative;
  display: flex;
  flex-direction: column;
  height: 100vh;
  overflow: hidden;
  background: #efefef;
  color: var(--ink);
  font: 17px/22px "Noto Sans", "DejaVu Sans", sans-serif;
}

button,
input,
select {
  border: 0;
  background: none;
  color: inherit;
  font: inherit;
  outline: 0;
}

button {
  display: flex;
  align-items: center;
  justify-content: center;
}

a {
  color: inherit;
  text-decoration: none;
}

svg {
  display: block;
  flex: none;
}

.sprite {
  position: absolute;
  width: 0;
  height: 0;
}

.ico {
  fill: none;
  stroke: #3b3b3b;
  stroke-width: 1.5;
  overflow: visible;
}

.ico text {
  fill: #3b3b3b;
  stroke: none;
  font: 14px "Liberation Sans", sans-serif;
  direction: ltr;
}

.ico .rot {
  font-size: 16px;
  transform: rotate(-45deg);
}

.pale {
  stroke: #b8b8b8;
}

.dim {
  stroke: #a8a8a8;
}

.chev {
  width: 10px;
  height: 6px;
  fill: none;
  stroke: #222;
  stroke-width: 2;
}

.chev.dim {
  stroke: #b0b0b0;
}

.bar {
  width: 1px;
  height: 36px;
  background: var(--line);
}

/* title bar */
.titlebar {
  display: grid;
  grid-template-columns: 1fr 518px 1fr;
  align-items: center;
  height: 72px;
  padding-right: 24px;
  color: #b8b8b8;
}

.doc {
  display: flex;
  align-items: center;
  gap: 22px;
}

.doc-name {
  display: flex;
  gap: 12px;
}

.logo {
  width: 24px;
  height: 24px;
}

.search {
  display: flex;
  align-items: center;
  gap: 20px;
  height: 48px;
  padding: 0 20px;
  border: 1px solid #d6d6d6;
  border-bottom: 2px solid #c4c4c4;
  border-radius: 6px;
  font-size: 20px;
}

.search input {
  flex: 1;
}

.search input::placeholder {
  color: #b8b8b8;
}

.window-btns {
  display: flex;
  justify-content: flex-end;
}

.window-btns button {
  width: 72px;
  height: 36px;
}

.window-btns .avatar {
  width: 36px;
  margin: 0 18px;
  border-radius: 50%;
  background: #c239b3;
  color: #fff;
  font-size: 15px;
}

/* ribbon tabs */
.tabs {
  display: flex;
  align-items: center;
  gap: 38px;
  height: 50px;
  padding: 0 29px 0 22px;
  font-size: 19px;
}

.tabs a {
  padding: 6px 0 5px;
  border-bottom: 4px solid transparent;
  white-space: nowrap;
}

.tabs .active {
  border-color: var(--green);
  border-radius: 2px;
  font-weight: bold;
}

.share {
  gap: 9px;
  width: 121px;
  height: 36px;
  margin: 0 auto 0 -16px;
  border-radius: 5px;
  background: var(--green);
  color: #fff;
}

.share svg {
  stroke: #fff;
}

/* ribbon */
.ribbon {
  margin: 0 12px;
  border-radius: 12px;
  background: #fff;
  box-shadow: 0 1px 4px rgba(0, 0, 0, .25);
}

.groups {
  display: flex;
  height: 149px;
  padding: 7px 0 8px;
}

.group {
  display: flex;
  flex-direction: column;
  border-left: 1px solid var(--line);
}

.body {
  display: flex;
  flex: 1;
}

.foot {
  display: flex;
  align-items: flex-end;
  height: 18px;
  padding-left: 6px;
  font-size: 15px;
  line-height: 18px;
}

.foot span {
  flex: 1;
  text-align: center;
  white-space: nowrap;
}

.launch {
  width: 12px;
  height: 12px;
  fill: none;
  stroke: #222;
  stroke-width: 2;
}

.g-clip {
  width: 166px;
}

.g-font {
  width: 351px;
}

.g-align {
  width: 352px;
}

.g-num {
  width: 242px;
}

.g-styles {
  width: 211px;
}

.g-cells {
  width: 147px;
}

.g-edit {
  width: 255px;
}

.g-addins {
  width: 118px;
}

.g-addins .foot {
  padding: 0;
}

.two {
  display: flex;
  flex-direction: column;
  padding: 5px 12px 0 8px;
}

.line {
  display: flex;
  align-items: center;
  height: 47px;
}

.slot {
  flex: none;
  width: 39px;
  height: 36px;
}

.drop {
  width: 21px;
  height: 36px;
}

.drop.wide {
  width: 36px;
}

.g-font .bar {
  margin: 0 2px;
}

.bar.tall {
  height: 94px;
  margin-top: 9px;
}

.align-main {
  width: 260px;
}

.g-align .two + .bar + .two {
  padding: 5px 8px 0 0;
}

.pressed {
  width: 36px;
  margin: 0 2px 0 1px;
  border: 1px solid #777;
  border-radius: 6px;
  background: #ebebeb;
}

.glyph {
  font-size: 20px;
}

.bold {
  font-weight: 600;
}

.italic {
  font-family: "Liberation Serif", serif;
  font-style: italic;
}

.under {
  text-decoration: underline 1px;
  text-underline-offset: 4px;
}

.combo {
  display: grid;
  align-items: center;
  height: 36px;
  border: 1px solid #8a8a8a;
  border-radius: 6px;
}

.combo > * {
  grid-area: 1 / 1;
}

.combo select {
  width: 100%;
  height: 34px;
  padding: 0 4px 0 19px;
  appearance: none;
}

.combo .chev {
  justify-self: end;
  margin-left: 2px;
}

.combo.name {
  width: 181px;
}

.combo.size {
  width: 65px;
  margin-right: 3px;
}

.combo.fill {
  flex: 1;
  font-size: 18px;
}

.stack {
  display: flex;
  flex: 1;
  flex-direction: column;
  margin: -3px 0 1px;
}

.stack button {
  flex: 1;
  gap: 24px;
  justify-content: flex-start;
}

.stack.text {
  padding-right: 18px;
  font-size: 18px;
}

.stack.text button {
  gap: 6px;
}

.stack.text .chev {
  margin-right: 6px;
}

.g-cells .stack span {
  min-width: 52px;
  text-align: right;
}

.stack button:disabled span {
  color: #b0b0b0;
}

.big {
  flex-direction: column;
  justify-content: flex-start;
  padding-top: 6px;
  white-space: nowrap;
}

.big .ico {
  margin-bottom: 7px;
}

.big span {
  display: flex;
  align-items: center;
  gap: 8px;
  line-height: 21px;
}

.g-clip .big {
  width: 70px;
  margin-right: 14px;
}

.g-clip .big span {
  margin-bottom: 6px;
}

.g-clip .stack {
  margin-right: 6px;
}

.g-edit .stack {
  flex: none;
  width: 70px;
  margin-right: 18px;
}

.g-edit .stack button {
  gap: 11px;
}

.stack .far {
  margin-right: 10px;
}

.sort,
.find {
  width: 78px;
}

.g-addins .big {
  width: 100%;
}

.collapse {
  flex: 1;
  align-items: flex-end;
  padding: 0 14px 6px 0;
}

.quick {
  display: flex;
  align-items: center;
  gap: 18px;
  height: 53px;
  padding-right: 12px;
  border-top: 1px solid #c8c8c8;
  border-radius: 0 0 12px 12px;
  background: #fafafa;
  font-size: 15px;
}

.quick .chev {
  margin: 0 -6px;
}

.quick .bar {
  margin: 0 -3px 0 -9px;
}

.quick label {
  display: flex;
  align-items: center;
  gap: 9px;
}

.quick .off {
  color: #b0b0b0;
}

.quick .edges {
  margin-right: 5px;
}

.quick .custom {
  margin-right: 10px;
}

.quick input {
  width: 18px;
  height: 18px;
  border: 2px solid #666;
  border-radius: 3px;
  appearance: none;
}

.quick input::before {
  content: "";
  display: block;
  width: 5px;
  height: 9px;
  margin: 1px 5px;
  border: solid #333;
  border-width: 0 2px 2px 0;
  transform: rotate(40deg);
}

.quick .off input {
  border-color: #c8c8c8;
  background: #ececec;
}

.quick .off input::before {
  border-color: #aaa;
}

/* formula bar */
.formula {
  display: flex;
  align-items: center;
  gap: 6px;
  height: 51px;
  padding: 9px 12px 3px;
}

.formula > div {
  display: flex;
  align-items: center;
  height: 34px;
  border: 1px solid var(--line);
  border-radius: 5px;
  background: #fff;
}

.namebox {
  width: 153px;
  padding: 0 7px 0 6px;
}

.namebox input {
  width: 100%;
  font-size: 21px;
}

.dots {
  margin: 0 7px 0 6px;
  fill: #444;
}

.fx {
  gap: 14px;
  width: 110px;
  padding-left: 9px;
}

.fx em {
  font: italic 26px/30px "Liberation Serif", serif;
}

.entry {
  flex: 1;
  padding-right: 6px;
}

.entry input {
  flex: 1;
}

/* worksheet */
.sheet {
  display: flex;
  flex: 1;
  min-height: 0;
}

.grid-wrap {
  position: relative;
  flex: 1;
  overflow: hidden;
  border-bottom: 1px solid #d6d6d6;
}

.cells {
  width: 100%;
  table-layout: fixed;
  border-spacing: 0;
  font: 19px/20px "Liberation Sans", "DejaVu Sans", sans-serif;
  text-align: center;
}

.cells td {
  height: 24px;
  border-left: 1px solid #e0e0e0;
  border-bottom: 1px solid #e0e0e0;
  background: #fff;
  color: #000;
}

.cells th {
  height: 24px;
  overflow: hidden;
  border-bottom: 1px solid transparent;
  border-left: 1px solid #b0b0b0;
  background: linear-gradient(to left, #f0f0f0, #ececec);
  color: #444;
  font-weight: normal;
}

.cells thead th {
  height: 29px;
  padding-top: 4px;
  border-left: 1px solid #ddd;
  border-bottom: 1px solid #a6a6a6;
  background: #efefef;
}

.cells thead th:last-child {
  padding-left: 7px;
  text-align: left;
}

.corner::before {
  content: "";
  display: block;
  width: 16px;
  height: 16px;
  margin-right: 20px;
  background: #d9d9d9;
  clip-path: polygon(0 0, 100% 100%, 0 100%);
}

.cells .filtered {
  color: #00f;
}

.cells .skips {
  border-bottom-color: #ccc;
}

.cells .ar {
  font-size: 15px;
}

.cells .boxed {
  border-color: #000;
  box-shadow: 1px 0 #000, 0 -1px #000, 1px -1px #000;
}

.cells .flat {
  border-color: transparent;
}

.cells .title {
  color: #c8450c;
  font-size: 15px;
}

.cells .peach {
  background: #fbe2d5;
}

.cells .blue {
  background: #94dcf8;
}

.cells .pink {
  background: #f2ceef;
}

.cells .lime {
  background: #b5e6a2;
}

.cells .ice {
  background: #daeaf8;
}

.cells .yellow {
  background: #ff0;
}

.head {
  display: flex;
  align-items: center;
  height: 22px;
  font-size: 13px;
  font-weight: bold;
  white-space: nowrap;
}

.head span {
  flex: 1;
  padding-right: 14px;
}

.head button {
  flex: none;
  width: 24px;
  height: 23px;
  border: 1px solid #ababab;
  background: linear-gradient(#fff, #ececf0);
}

.head svg {
  fill: #555;
}

.shape {
  position: absolute;
  right: 1071px;
  width: 162px;
  height: 54px;
  font-size: 15px;
}

.shape svg {
  fill: #7f7f7f;
  stroke: #0b2838;
  stroke-width: 3;
}

.shape span {
  position: absolute;
  inset: 14px 30px auto 14px;
  line-height: 24px;
  text-align: center;
}

.home {
  top: 156px;
  color: #fff;
}

.sales {
  top: 220px;
  color: #000;
}

.sales svg {
  fill: #caeefb;
}

.vscroll {
  display: flex;
  flex-direction: column;
  align-items: center;
  gap: 8px;
  width: 26px;
  margin: 6px 2px 0;
  padding: 6px 0;
  border-radius: 13px;
  background: #f5f5f5;
}

.vscroll i {
  flex: 1;
  width: 12px;
  margin-top: 62px;
  border-radius: 6px;
  background: #707070;
}

.vscroll svg,
.track svg {
  fill: #707070;
}

/* sheet tabs */
.sheetbar {
  display: flex;
  align-items: center;
  gap: 6px;
  height: 47px;
  padding-right: 24px;
  padding-left: 28px;
  border-bottom: 1px solid #fff;
  font-size: 20px;
}

.arrow {
  width: 32px;
  height: 32px;
  margin-left: 10px;
}

.sheetbar .bar {
  height: 28px;
}

.sheet-tab {
  height: 36px;
  padding: 0 13px;
  border-radius: 7px;
  line-height: 38px;
}

.sheet-tab.gray {
  margin-right: 47px;
  background: #7f7f7f;
  color: #fff;
}

.sheet-tab.green {
  background: #b5e6a2;
}

.sheet-tab.current {
  align-self: flex-start;
  height: 41px;
  background: linear-gradient(#fff, #d3f1fb);
  box-shadow: 0 1px 2px rgba(0, 0, 0, .2);
  font-size: 21px;
}

.current span {
  display: block;
  height: 37px;
  border-bottom: 3px solid var(--green);
  line-height: 38px;
}

.add {
  width: 36px;
  height: 36px;
  margin-right: 50px;
}

.hscroll {
  display: flex;
  align-items: center;
  gap: 22px;
  margin-right: auto;
}

.hscroll .dots {
  margin: 0;
}

.track {
  display: flex;
  align-items: center;
  gap: 8px;
  width: 711px;
  height: 26px;
  padding: 0 8px;
  border-radius: 13px;
  background: #f5f5f5;
}

.track i {
  width: 26px;
  height: 12px;
  border-radius: 6px;
  background: #707070;
}

.track .end {
  margin-right: auto;
}

/* status bar */
.status {
  display: flex;
  align-items: center;
  gap: 24px;
  height: 35px;
  padding: 0 16px 0 14px;
  border-bottom: 2px solid #c0bcb0;
  background: #f4f4f4;
  font-size: 16px;
}

.status .ico {
  stroke: #222;
}

.macro {
  margin-right: 6px;
}

.access {
  display: flex;
  align-items: center;
  gap: 6px;
  font-weight: bold;
}

.views {
  display: flex;
  height: 33px;
  margin-right: auto;
}

.views button {
  width: 60px;
}

.views .on {
  background: #e0e0e0;
}

.zoom {
  display: flex;
  align-items: center;
  gap: 9px;
  margin-right: -15px;
}

.zoom input {
  width: 148px;
  height: 20px;
  background:
    linear-gradient(#666, #666) 50% 50% / 2px 8px no-repeat,
    linear-gradient(#666, #666) 50% 50% / 100% 2px no-repeat;
  appearance: none;
}

.zoom input::-webkit-slider-thumb {
  width: 8px;
  height: 17px;
  background: #666;
  appearance: none;
}

.zoom span {
  margin-right: 16px;
}

/* taskbar */
.taskbar {
  display: grid;
  grid-template-columns: 1fr auto 1fr;
  align-items: center;
  height: 70px;
  background: linear-gradient(to right, #f6f1e3, #f3ece0);
}

.weather {
  position: relative;
  justify-self: start;
  margin-right: 31px;
}

.weather span {
  position: absolute;
  top: -6px;
  right: 12px;
  padding: 0 7px;
  border-radius: 12px;
  background: #fdfbf7;
  font-size: 15px;
}

.apps {
  display: flex;
}

.apps button {
  position: relative;
  width: 66px;
  height: 70px;
}

.apps svg {
  width: 36px;
  height: 36px;
}

.run::after {
  content: "";
  position: absolute;
  bottom: 6px;
  width: 9px;
  height: 5px;
  border-radius: 3px;
  background: #858585;
}

.run b {
  position: absolute;
  top: 9px;
  left: 7px;
  width: 24px;
  height: 24px;
  border-radius: 50%;
  background: #2c7f8e;
  color: #fff;
  font-size: 14px;
}

.m365 {
  fill: #fff;
  font: bold 9px "Liberation Sans", sans-serif;
  direction: ltr;
}

.canva {
  fill: #fff;
  font: italic bold 11px "Liberation Serif", serif;
  direction: ltr;
}

.tray {
  display: flex;
  align-items: center;
  justify-self: end;
  gap: 10px;
  padding-left: 29px;
}

.tray .ico {
  stroke: #222;
}

.tray .up {
  margin-left: 15px;
}

.lang {
  margin: 0 30px;
}

.clock {
  margin-right: 14px;
  line-height: 23px;
  font-size: 16px;
  text-align: left;
}

.brand {
  position: absolute;
  right: 840px;
  bottom: 18px;
  display: flex;
  flex-direction: column;
  align-items: center;
  width: 240px;
  color: rgba(128, 135, 140, .2);
  white-space: nowrap;
  pointer-events: none;
}

.brand b {
  font: bold 66px/80px "DejaVu Sans", sans-serif;
}

.brand span {
  font: bold 38px/38px "Liberation Sans", sans-serif;
}
```
FILE: script.js
```js
const cols = 'ABCDEFGHIJKLMNOPQRST'.split('')
const widths = { C: 118, D: 114, E: 84, F: 129, G: 146 }
const colors = { C: 'peach', D: 'blue', E: 'pink', F: 'lime', G: 'ice' }
const rowNums = [4, 5, 6, 7, 9, 10, 11, 13, 14, 15, 17, 18, 19, 20, 21, 22, 23, 24, 25, 26, 27, 28]

const heads = { C: 'اسم العميل', D: 'اسم المنتج', E: 'العدد', F: 'سعر المنتج', G: 'الاجمالى' }
const sales = {
  7: ['محمد', 'شاحن', 5, 100, 500],
  9: ['إبراهيم', 'موبايل', 3, 500, 1500],
  10: ['محمود', 'جراب', 4, 300, 1200],
  11: ['عبدالله', 'شاحن', 9, 100, 900],
  13: ['حازم', 'موبايل', 2, 300, 600],
  14: ['مصطفى', 'جراب', 6, 200, 1200],
  15: ['يحيى', 'شاحن', 4, 100, 400],
  17: ['زينب', 'موبايل', 9, 600, 5400],
  18: ['احمد', 'جراب', 7, 200, 1400]
}
const totals = {
  20: ['SUBTOTAL', 49, 13100],
  22: ['MAX', 9, 5600],
  24: ['MIN', 2, 400]
}

const arrow = '<svg width="10" height="7"><path d="M0 0h10L5 7z"/></svg>'
const funnel = '<svg width="16" height="14"><path d="M4 0h12l-4 6v8h-4V6zM0 9h6l-3 4z"/></svg>'

// column widths, the last column takes what is left
document.querySelector('#cols').innerHTML = '<col style="width:40px">' +
  cols.map(c => c === 'T' ? '<col>' : `<col style="width:${widths[c] || 86}px">`).join('')

document.querySelector('#letters').innerHTML = '<th class="corner"></th>' +
  cols.map(c => `<th>${c}</th>`).join('')

function cell(n, c) {
  const i = cols.indexOf(c) - 2
  if (n === 4 && c === 'D') return '<td class="title" colspan="3">جدول مبيعات</td>'
  if (n === 4 && (c === 'E' || c === 'F')) return ''
  if (n === 6 && heads[c]) {
    return `<td class="boxed ${colors[c]}"><div class="head"><span>${heads[c]}</span>` +
      `<button type="button" aria-label="تصفية">${c === 'D' ? funnel : arrow}</button></div></td>`
  }
  if (sales[n] && colors[c]) {
    return `<td class="boxed ${colors[c]} ${i < 2 ? 'ar' : ''}">${sales[n][i]}</td>`
  }
  if (totals[n]) {
    const edge = n === 20 ? 'boxed' : 'flat'
    if (c === 'C') return `<td class="${edge} yellow" colspan="2">${totals[n][0]}</td>`
    if (c === 'D') return ''
    if (c === 'E') return `<td class="${edge} peach">${totals[n][1]}</td>`
    if (c === 'G') return `<td class="${edge} peach">${totals[n][2]}</td>`
  }
  return '<td></td>'
}

document.querySelector('#rows').innerHTML = rowNums.map(n => {
  const cls = (sales[n] ? 'filtered' : '') + ([7, 11, 15].includes(n) ? ' skips' : '')
  return `<tr><th class="${cls}">${n}</th>${cols.map(c => cell(n, c)).join('')}</tr>`
}).join('')
```
